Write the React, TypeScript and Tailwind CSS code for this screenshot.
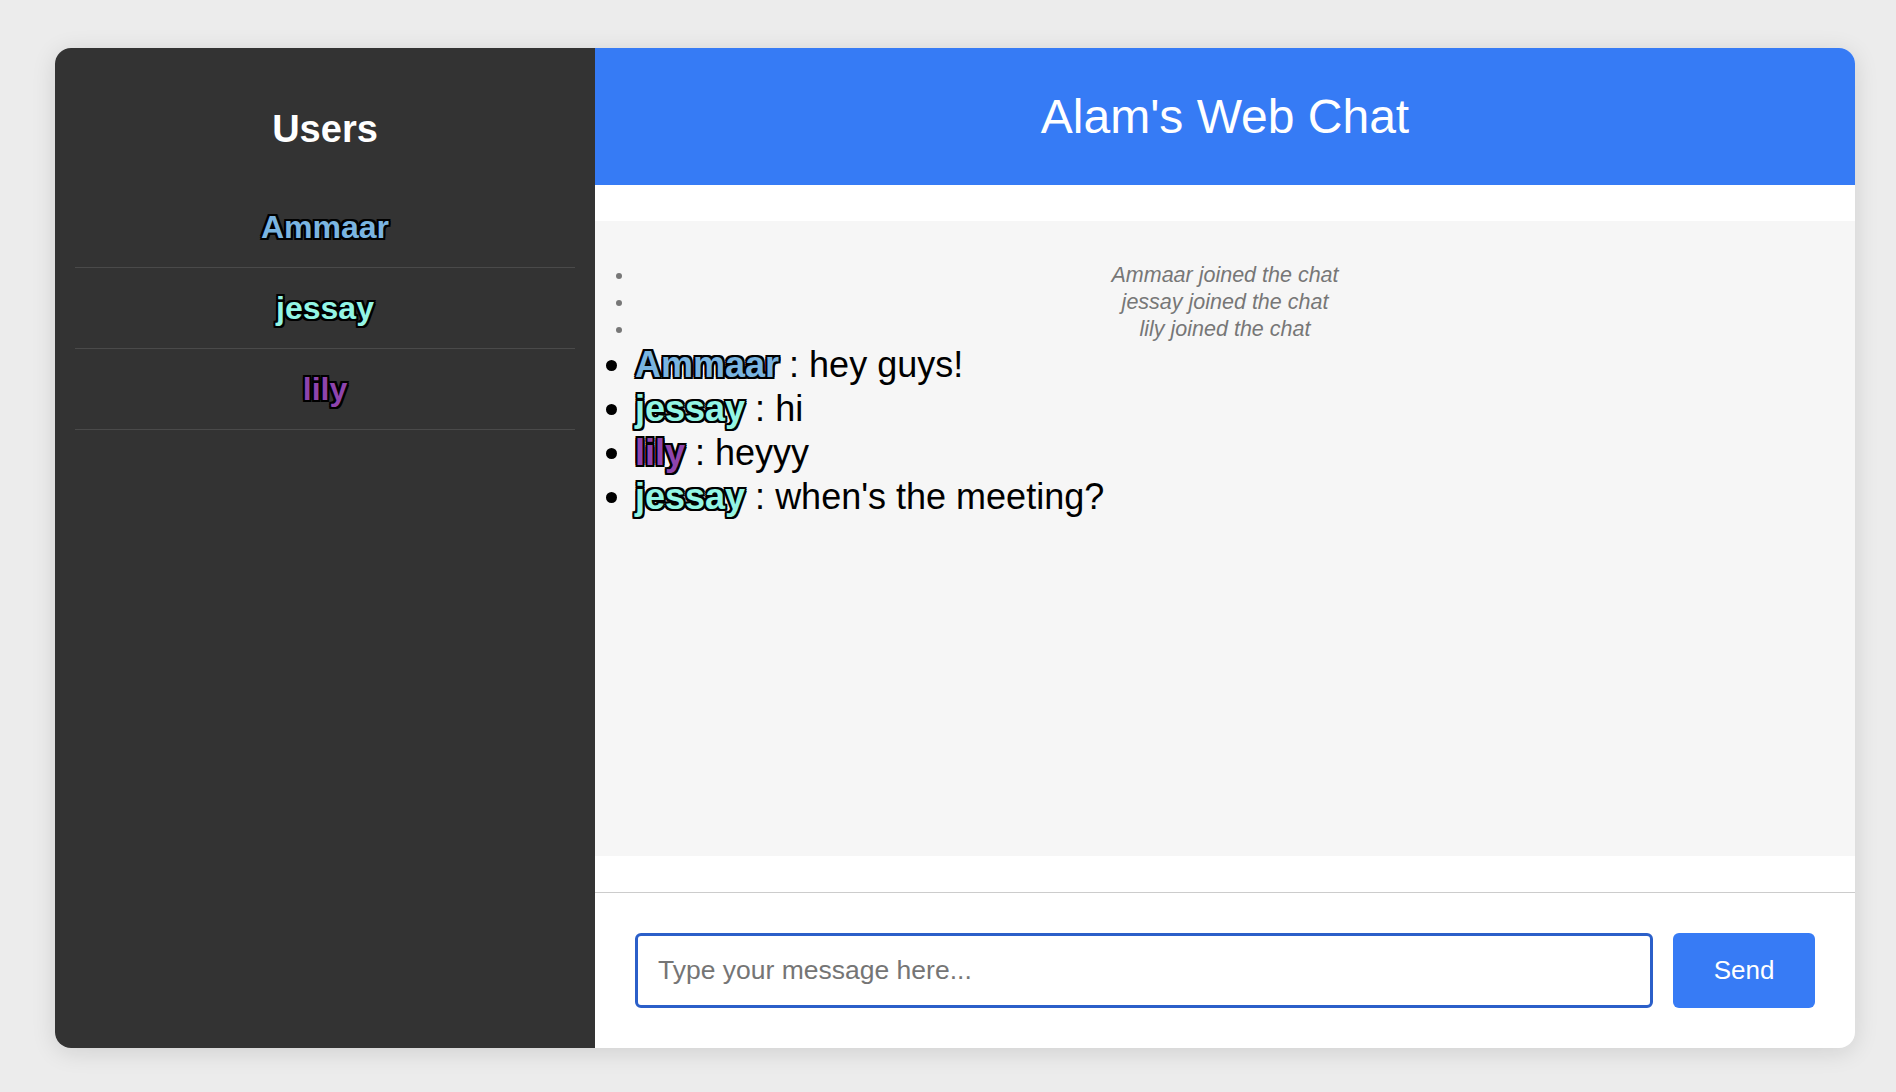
import React from 'react';

const outline =
  '[text-shadow:_-2px_-2px_0_#000,_2px_-2px_0_#000,_-2px_2px_0_#000,_2px_2px_0_#000,_0_-2px_0_#000,_0_2px_0_#000,_-2px_0_0_#000,_2px_0_0_#000]';

const users = [
  { name: 'Ammaar', color: 'text-[#7ab4e0]' },
  { name: 'jessay', color: 'text-[#93f5e4]' },
  { name: 'lily', color: 'text-[#8e44ad]' },
];

const joined = ['Ammaar joined the chat', 'jessay joined the chat', 'lily joined the chat'];

const messages = [
  { user: 'Ammaar', color: 'text-[#7ab4e0]', text: 'hey guys!' },
  { user: 'jessay', color: 'text-[#93f5e4]', text: 'hi' },
  { user: 'lily', color: 'text-[#8e44ad]', text: 'heyyy' },
  { user: 'jessay', color: 'text-[#93f5e4]', text: "when's the meeting?" },
];

export default function App() {
  return (
    <div className="min-h-screen bg-[#ececec] pl-[55px] pt-[48px] font-['Liberation_Sans',Arial,sans-serif]">
      <div className="flex h-[1000px] w-[1800px] overflow-hidden rounded-[16px] bg-white shadow-[0_4px_24px_rgba(0,0,0,0.12)]">
        {/* Users sidebar */}
        <aside className="w-[540px] shrink-0 bg-[#333333] px-[20px] pt-[59px]">
          <h2 className="text-center text-[38px] font-bold leading-[44px] text-white">Users</h2>
          <ul className="mt-[36px]">
            {users.map((u) => (
              <li
                key={u.name}
                className="flex h-[81px] items-center justify-center border-b border-[#4a4a4a]"
              >
                <span className={`text-[32px] font-bold ${u.color} ${outline}`}>{u.name}</span>
              </li>
            ))}
          </ul>
        </aside>

        {/* Chat */}
        <main className="flex flex-1 flex-col">
          <header className="flex h-[137px] shrink-0 items-center justify-center bg-[#367bf5]">
            <h1 className="text-[48px] font-normal text-white">Alam's Web Chat</h1>
          </header>

          <div className="flex flex-1 flex-col py-[36px]">
            <ul className="flex-1 list-outside list-disc bg-[#f6f6f6] px-[40px] pt-[41px]">
              {joined.map((line) => (
                <li key={line} className="text-center text-[21.5px] italic leading-[27px] text-[#777777]">
                  {line}
                </li>
              ))}
              {messages.map((m, i) => (
                <li key={i} className="text-[36px] leading-[44px] text-black">
                  <span className={`font-bold ${m.color} ${outline}`}>{m.user}</span> : {m.text}
                </li>
              ))}
            </ul>
          </div>

          <div className="flex shrink-0 items-center gap-[20px] border-t border-[#cccccc] px-[40px] pb-[40px] pt-[40px]">
            <input
              autoFocus
              type="text"
              placeholder="Type your message here..."
              className="h-[75px] flex-1 rounded-[6px] border-[3px] border-[#2b5fc9] bg-white px-[20px] text-[26.5px] text-black outline-none placeholder:text-[#757575]"
            />
            <button className="h-[75px] w-[142px] rounded-[6px] bg-[#377bf5] text-[26px] text-white">
              Send
            </button>
          </div>
        </main>
      </div>
    </div>
  );
}
